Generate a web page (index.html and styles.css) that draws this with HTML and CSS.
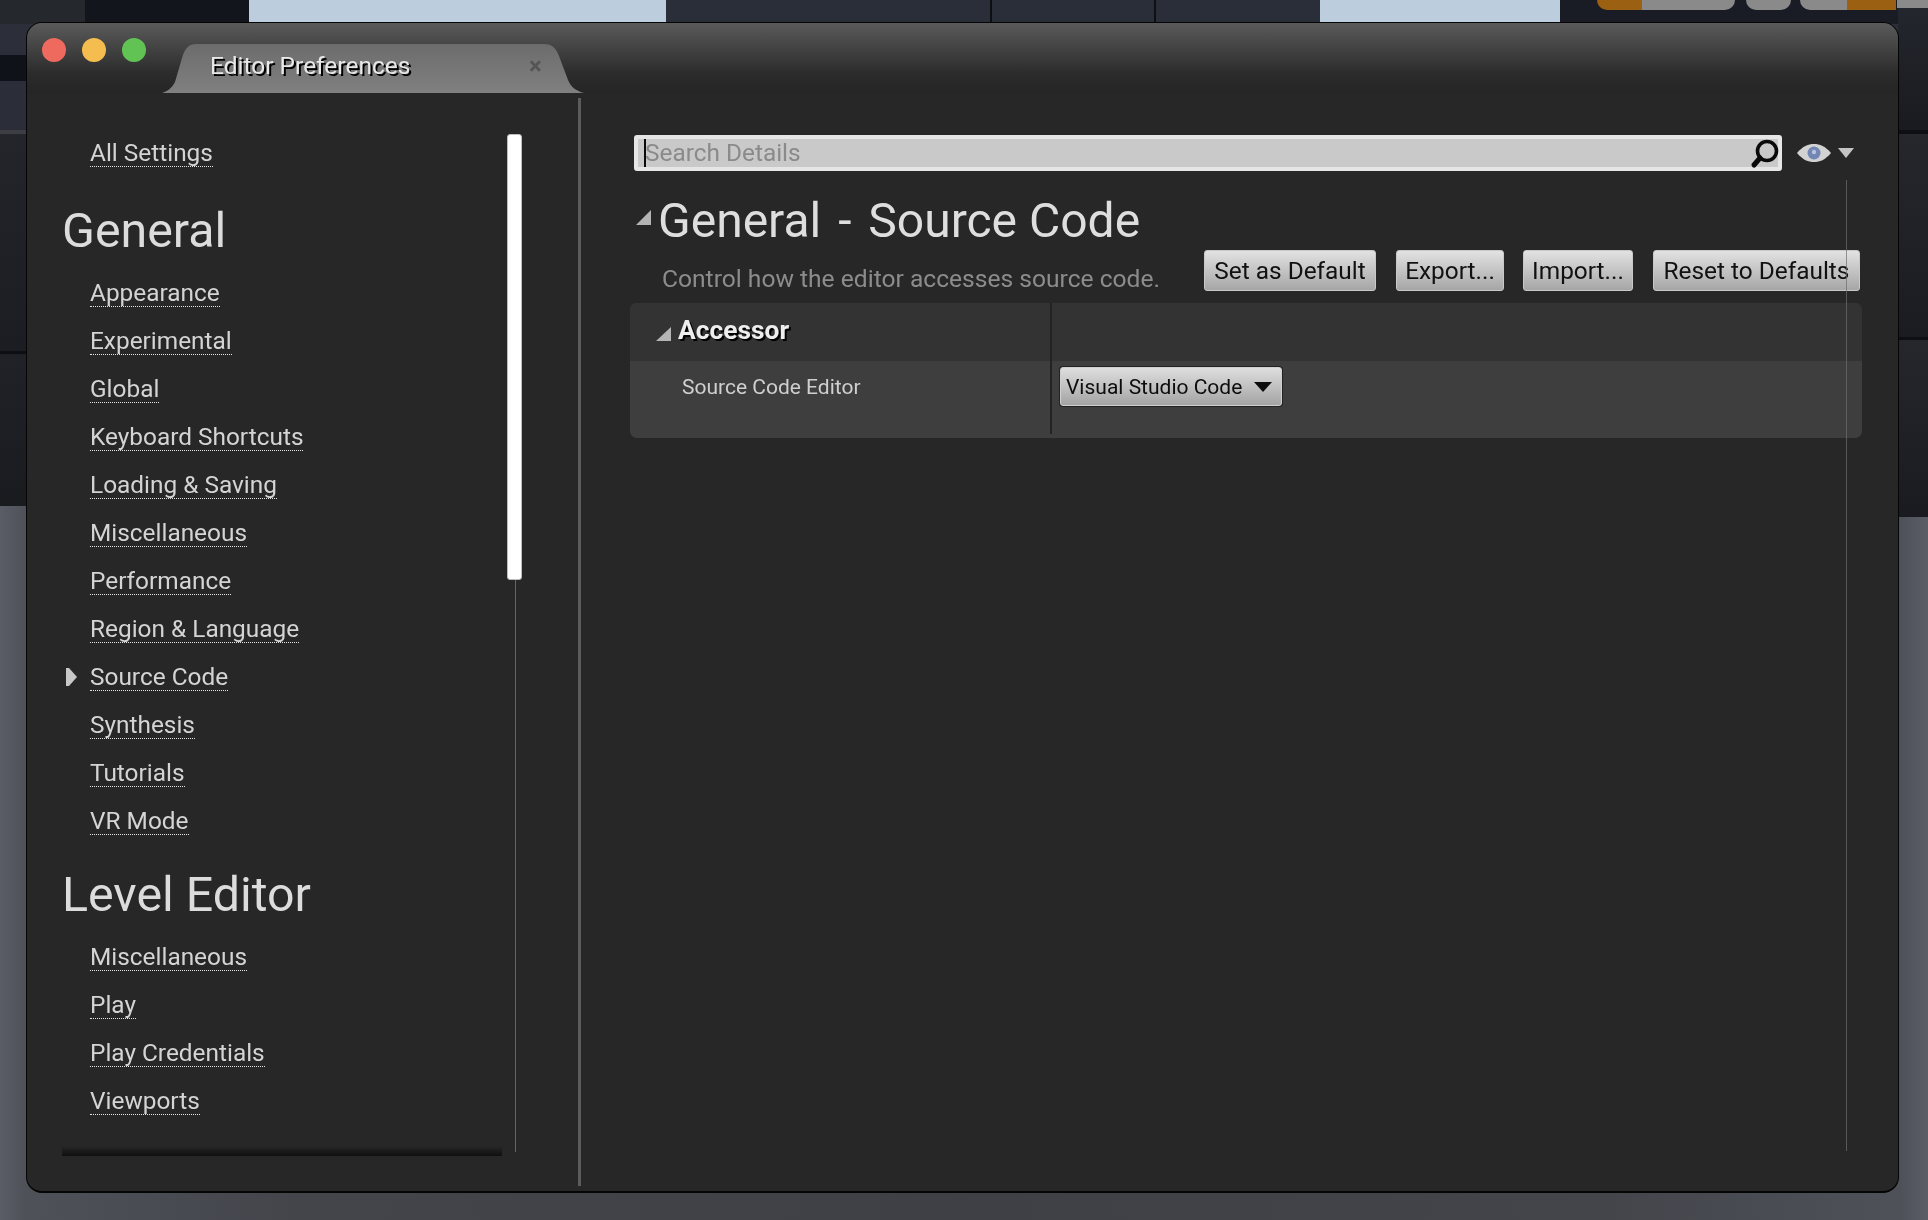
FILE: index.html
```html
<!DOCTYPE html>
<html lang="en">
<head>
    <meta charset="UTF-8">
    <meta name="viewport" content="width=device-width, initial-scale=1.0">
    <title>Editor Preferences</title>
    <link rel="stylesheet" href="styles.css">
</head>
<body>
    <div class="backdrop">
        <div class="bd-piece bd-top-left"></div>
        <div class="bd-piece bd-dark"></div>
        <div class="bd-piece bd-top-mid"></div>
        <div class="bd-piece bd-sky bd-sky-a"></div>
        <div class="bd-piece bd-sky bd-sky-b"></div>
        <div class="bd-piece bd-top-right"></div>
        <div class="bd-piece bd-side-right"></div>
        <div class="bd-piece bd-blot"></div>
        <div class="bd-piece bd-glow"></div>
        <div class="bd-piece bd-line bd-line-a"></div>
        <div class="bd-piece bd-line bd-line-b"></div>
        <div class="bd-piece bd-line bd-line-c"></div>
        <div class="bd-piece bd-line bd-line-d"></div>
        <div class="bd-piece bd-line bd-line-e"></div>
        <div class="bd-tool bd-orange-a"></div>
        <div class="bd-tool bd-grey-a"></div>
        <div class="bd-tool bd-grey-b"></div>
        <div class="bd-tool bd-grey-c"></div>
        <div class="bd-tool bd-orange-b"></div>
        <div class="bd-tool bd-grey-d"></div>
    </div>

    <div class="window">
        <div class="titlebar">
            <div class="traffic">
                <span class="light light-red"></span>
                <span class="light light-yellow"></span>
                <span class="light light-green"></span>
            </div>
            <div class="tab">
                <span class="tab-label">Editor Preferences</span>
                <span class="tab-close">×</span>
            </div>
        </div>

        <div class="window-body">
            <div class="sidebar">
                <div class="nav">
                    <div class="nav-item nav-all"><a>All Settings</a></div>
                    <h2 class="nav-heading nav-heading-first">General</h2>
                    <div class="nav-item"><a>Appearance</a></div>
                    <div class="nav-item"><a>Experimental</a></div>
                    <div class="nav-item"><a>Global</a></div>
                    <div class="nav-item"><a>Keyboard Shortcuts</a></div>
                    <div class="nav-item"><a>Loading &amp; Saving</a></div>
                    <div class="nav-item"><a>Miscellaneous</a></div>
                    <div class="nav-item"><a>Performance</a></div>
                    <div class="nav-item"><a>Region &amp; Language</a></div>
                    <div class="nav-item nav-active">
                        <svg class="nav-arrow" width="12" height="18" viewBox="0 0 12 18"><path d="M0 0 H3 L11 9 L3 18 H0 Z" fill="#c8c8c8"/></svg>
                        <a>Source Code</a>
                    </div>
                    <div class="nav-item"><a>Synthesis</a></div>
                    <div class="nav-item"><a>Tutorials</a></div>
                    <div class="nav-item"><a>VR Mode</a></div>
                    <h2 class="nav-heading">Level Editor</h2>
                    <div class="nav-item"><a>Miscellaneous</a></div>
                    <div class="nav-item"><a>Play</a></div>
                    <div class="nav-item"><a>Play Credentials</a></div>
                    <div class="nav-item"><a>Viewports</a></div>
                </div>
                <div class="scroll-track"><div class="scroll-thumb"></div></div>
            </div>
            <div class="pane-divider"></div>

            <div class="content">
                <div class="search-row">
                    <div class="search">
                        <span class="caret"></span>
                        <span class="search-text">Search Details</span>
                        <svg class="search-icon" width="32" height="32" viewBox="0 0 32 32">
                            <circle cx="18" cy="13" r="9.5" fill="none" stroke="#0a0a0a" stroke-width="3.6"/>
                            <path d="M11 20 L5 27" stroke="#0a0a0a" stroke-width="5" stroke-linecap="round"/>
                        </svg>
                    </div>
                    <svg class="eye" width="36" height="20" viewBox="0 0 36 20">
                        <path d="M1 10 C7 3 12 1 18 1 C24 1 29 3 35 10 C29 17 24 19 18 19 C12 19 7 17 1 10 Z" fill="#d2d2d2"/>
                        <circle cx="18" cy="10" r="6.5" fill="#7186b4"/>
                        <circle cx="18" cy="9" r="2.2" fill="#b8c4dc"/>
                    </svg>
                    <svg class="eye-drop" width="16" height="10" viewBox="0 0 16 10"><path d="M0 0 H16 L8 10 Z" fill="#c4c4c4"/></svg>
                </div>

                <div class="details-head">
                    <svg class="corner" width="15" height="15" viewBox="0 0 15 15"><path d="M15 0 V15 H0 Z" fill="#b4b4b4"/></svg>
                    <h1 class="details-title">General <span class="title-dash">-</span> Source Code</h1>
                </div>

                <div class="actions">
                    <div class="details-desc">Control how the editor accesses source code.</div>
                    <div class="btn-group">
                        <button class="btn btn-default">Set as Default</button>
                        <button class="btn btn-export">Export...</button>
                        <button class="btn btn-import">Import...</button>
                        <button class="btn btn-reset">Reset to Defaults</button>
                    </div>
                </div>

                <div class="prop-table">
                    <div class="prop-head">
                        <div class="prop-cell-name">
                            <svg class="corner corner-small" width="15" height="14" viewBox="0 0 15 14"><path d="M15 0 V14 H0 Z" fill="#b4b4b4"/></svg>
                            <span class="prop-group">Accessor</span>
                        </div>
                    </div>
                    <div class="prop-row">
                        <div class="prop-label">Source Code Editor</div>
                        <div class="prop-value">
                            <div class="combo">
                                <span>Visual Studio Code</span>
                                <svg width="18" height="10" viewBox="0 0 18 10"><path d="M0 0 H18 L9 10 Z" fill="#0c0c0c"/></svg>
                            </div>
                        </div>
                    </div>
                </div>
                <div class="content-rule"></div>
            </div>
        </div>
    </div>
</body>
</html>
```

FILE: styles.css
```css
*
{
    box-sizing: border-box;
}
body
{
    margin: 0;
    width: 1928px;
    height: 1220px;
    overflow: hidden;
    position: relative;
    font-family: Roboto, "Liberation Sans", sans-serif;
    background: linear-gradient(90deg, #5a5d66 0, #4f5159 26px, #43454b 300px, #3f4045 960px, #43454b 1600px, #4f5159 1900px, #5a5d66 100%);
}

/* stuff behind the window */
.backdrop
{
    position: absolute;
    left: 0;
    top: 0;
    width: 1928px;
    height: 506px;
    background: linear-gradient(180deg, #2c2f39 0, #2b2e38 128px, #23252b 134px, #1b1d22 352px, #202228 356px, #191b1f 506px);
}
.bd-piece, .bd-tool
{
    position: absolute;
}
.bd-top-left
{
    left: 0;
    top: 0;
    width: 85px;
    height: 24px;
    background: #25282d;
}
.bd-dark
{
    left: 85px;
    top: 0;
    width: 164px;
    height: 24px;
    background: #12151b;
}
.bd-top-mid
{
    left: 666px;
    top: 0;
    width: 654px;
    height: 24px;
    background: #2a2e38;
}
.bd-sky
{
    top: 0;
    height: 24px;
    background: #bccdde;
}
.bd-sky-a
{
    left: 249px;
    width: 417px;
}
.bd-sky-b
{
    left: 1320px;
    width: 240px;
}
.bd-top-right
{
    left: 1560px;
    top: 0;
    width: 368px;
    height: 24px;
    background: #191c24;
}
.bd-side-right
{
    left: 1898px;
    top: 0;
    width: 30px;
    height: 517px;
    background: linear-gradient(180deg, #24272e 0, #1a1b20 130px, #25272c 134px, #1b1c21 337px, #25272c 340px, #1a1b20 517px);
}
.bd-blot
{
    left: 0;
    top: 55px;
    width: 26px;
    height: 26px;
    background: #0f1218;
}
.bd-glow
{
    left: 0;
    top: 130px;
    width: 26px;
    height: 4px;
    background: #3c3e44;
}
.bd-line
{
    background: #0e0f12;
}
.bd-line-a
{
    left: 0;
    top: 351px;
    width: 26px;
    height: 3px;
}
.bd-line-b
{
    left: 1898px;
    top: 130px;
    width: 30px;
    height: 4px;
}
.bd-line-c
{
    left: 1898px;
    top: 337px;
    width: 30px;
    height: 3px;
}
.bd-line-d
{
    left: 990px;
    top: 0;
    width: 2px;
    height: 24px;
}
.bd-line-e
{
    left: 1154px;
    top: 0;
    width: 2px;
    height: 24px;
}
.bd-tool
{
    top: 0;
    height: 10px;
    background: #8a8a8a;
}
.bd-orange-a
{
    left: 1597px;
    width: 50px;
    background: #9c6012;
    border-radius: 0 0 0 10px;
}
.bd-grey-a
{
    left: 1642px;
    width: 93px;
    border-radius: 0 0 10px 0;
}
.bd-grey-b
{
    left: 1746px;
    width: 45px;
    border-radius: 0 0 10px 10px;
}
.bd-grey-c
{
    left: 1800px;
    width: 47px;
    border-radius: 0 0 0 10px;
}
.bd-orange-b
{
    left: 1847px;
    width: 49px;
    background: #9c6012;
}
.bd-grey-d
{
    left: 1897px;
    width: 31px;
    height: 8px;
}

/* window */
.window
{
    position: relative;
    margin: 22px 0 0 26px;
    width: 1873px;
    height: 1171px;
    background: #272727;
    border: 1px solid #050505;
    border-bottom-width: 2px;
    border-radius: 16px;
    overflow: hidden;
    filter: blur(0.4px);
}
.titlebar
{
    display: flex;
    height: 70px;
    background: linear-gradient(180deg, #5a5a5a 0, #434343 25px, #2c2c2c 50px, #252525 70px);
}
.traffic
{
    display: flex;
    gap: 16px;
    margin: 15px 0 0 15px;
}
.light
{
    display: block;
    width: 24px;
    height: 24px;
    border-radius: 50%;
}
.light-red
{
    background: #ee6a5f;
}
.light-yellow
{
    background: #f5bd4f;
}
.light-green
{
    background: #61c354;
}
.tab
{
    position: relative;
    align-self: flex-end;
    margin-left: 16px;
    width: 422px;
    height: 49px;
    background: linear-gradient(180deg, #6c6c6c 0, #808080 100%);
    clip-path: path("M0 49 C6 47 10 44 13 38 L20 14 C23 4 27 0 34 0 L382 0 C390 0 394 4 397 12 L406 36 C409 43 414 47 422 49 Z");
    display: flex;
    align-items: center;
}
.tab-label
{
    margin-left: 48px;
    margin-top: -6px;
    font-size: 24.5px;
    color: #e8e8e8;
    text-shadow: 2px 2px 0 #000;
}
.tab-close
{
    position: absolute;
    left: 367px;
    top: 8px;
    font-size: 24px;
    font-weight: 700;
    color: #555;
}
.window-body
{
    display: flex;
    height: 1098px;
}

/* left side */
.sidebar
{
    display: flex;
    width: 551px;
    padding: 35px 0 0 35px;
}
.nav
{
    position: relative;
    width: 440px;
    height: 1028px;
    overflow: hidden;
}
.nav::after
{
    content: "";
    position: absolute;
    left: 0;
    right: 0;
    bottom: 0;
    height: 10px;
    background: linear-gradient(180deg, rgba(15,15,15,0), #0f0f0f);
}
.nav-item
{
    position: relative;
    height: 48px;
    padding-left: 28px;
    font-size: 24.4px;
    color: #d4d4d4;
}
.nav-item > a
{
    display: inline-block;
    height: 34px;
    line-height: 40px;
    margin-top: 5px;
    border-bottom: 1px dotted #e6e6e6;
}
.nav-arrow
{
    position: absolute;
    left: 4px;
    top: 16px;
}
.nav-heading
{
    margin: 10px 0 0;
    height: 78px;
    font-size: 48.3px;
    font-weight: 400;
    line-height: 82px;
    color: #dcdcdc;
}
.nav-heading-first
{
    margin-top: 14px;
}
.scroll-track
{
    margin-left: 5px;
    width: 15px;
    height: 1018px;
    background: linear-gradient(90deg, transparent 8px, #666 8px, #666 9px, transparent 9px);
    margin-top: 6px;
}
.scroll-thumb
{
    width: 15px;
    height: 446px;
    background: #fff;
    border: 1px solid #bdbdbd;
    border-radius: 3px;
}
.pane-divider
{
    width: 3px;
    height: 1088px;
    margin-top: 5px;
    background: #5c5c5c;
}

/* right side */
.content
{
    position: relative;
    width: 1316px;
    padding-top: 42px;
}
.search-row
{
    display: flex;
    align-items: center;
    margin-left: 53px;
    height: 36px;
}
.search
{
    position: relative;
    display: flex;
    align-items: center;
    width: 1148px;
    height: 36px;
    background: #c9c9c9;
    border: 4px solid #e6e6e6;
    border-radius: 3px;
    padding-left: 7px;
}
.caret
{
    position: absolute;
    left: 6px;
    top: 0;
    width: 2px;
    height: 28px;
    background: #0a0a0a;
}
.search-text
{
    margin-top: -2px;
    font-size: 24.4px;
    color: #8a8a8a;
}
.search-icon
{
    position: absolute;
    right: -3px;
    top: -1px;
}
.eye
{
    margin-left: 14px;
}
.eye-drop
{
    margin-left: 6px;
}
.details-head
{
    display: flex;
    align-items: center;
    margin-left: 55px;
    margin-top: 14px;
    height: 66px;
}
.corner
{
    margin-top: -1px;
}
.details-title
{
    margin: 5px 0 0 7px;
    font-size: 48px;
    font-weight: 400;
    color: #dedede;
}
.title-dash
{
    margin: 0 5px;
}
.actions
{
    display: flex;
    justify-content: space-between;
    align-items: flex-end;
    margin: -1px 37px 0 81px;
    height: 41px;
}
.details-desc
{
    font-size: 24.6px;
    line-height: 24px;
    color: #8c8c8c;
}
.btn-group
{
    display: flex;
    gap: 20px;
}
.btn
{
    height: 41px;
    padding: 0;
    font-family: inherit;
    font-size: 24.4px;
    color: #111;
    background: linear-gradient(180deg, #e2e2e2 0, #a6a6a6 100%);
    border: 1px solid #c8c8c8;
    border-radius: 3px;
}
.btn-default
{
    width: 172px;
}
.btn-export
{
    width: 108px;
    margin-right: -1px;
}
.btn-import
{
    width: 110px;
}
.btn-reset
{
    width: 207px;
}
.prop-table
{
    margin: 12px 0 0 49px;
    width: 1232px;
    height: 135px;
    border-radius: 7px;
    overflow: hidden;
    background: #3e3e3e;
    position: relative;
}
.prop-table::after
{
    content: "";
    position: absolute;
    left: 420px;
    top: 0;
    width: 2px;
    height: 131px;
    background: #232323;
}
.prop-head
{
    height: 58px;
    background: #333;
    display: flex;
    align-items: center;
}
.prop-cell-name
{
    display: flex;
    align-items: center;
    padding-left: 26px;
}
.corner-small
{
    margin-top: 3px;
}
.prop-group
{
    margin: -5px 0 0 7px;
    font-size: 26.4px;
    font-weight: 700;
    color: #eee;
    text-shadow: 2px 2px 0 #000;
}
.prop-row
{
    display: flex;
    height: 77px;
    padding-top: 6px;
}
.prop-label
{
    width: 430px;
    padding-left: 52px;
    font-size: 21px;
    line-height: 40px;
    color: #cfcfcf;
}
.combo
{
    display: flex;
    align-items: center;
    justify-content: space-between;
    width: 222px;
    height: 39px;
    padding: 0 9px 0 5px;
    font-size: 21px;
    color: #0d0d0d;
    background: linear-gradient(180deg, #dedede 0, #a4a4a4 100%);
    border: 1px solid #d0d0d0;
    border-radius: 3px;
    box-shadow: 0 0 0 1px #222;
}
.content-rule
{
    position: absolute;
    left: 1265px;
    top: 87px;
    width: 1px;
    height: 971px;
    background: rgba(110,110,110,0.7);
}
```
